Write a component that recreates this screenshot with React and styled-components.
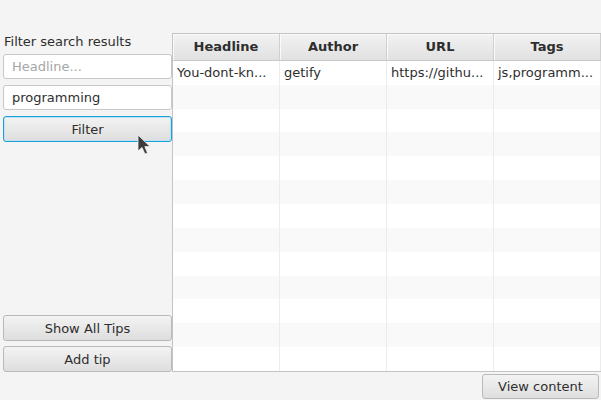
import React from 'react';
import styled, { createGlobalStyle } from 'styled-components';

const GlobalStyle = createGlobalStyle`
  html, body { margin: 0; padding: 0; }
  body {
    background: #f4f4f4;
    font-family: "DejaVu Sans", "Liberation Sans", sans-serif;
    font-size: 13px;
    color: #2e2e2e;
  }
`;

const Window = styled.div`
  width: 601px;
  height: 400px;
  display: flex;
  flex-direction: column;
  background: #f4f4f4;
  position: relative;
  overflow: hidden;
`;

const Main = styled.div`
  display: flex;
  height: 372px;
  padding-top: 33px;
  box-sizing: border-box;
`;

const Side = styled.div`
  width: 169px;
  padding-left: 3px;
  display: flex;
  flex-direction: column;
  gap: 6px;
  margin-top: 1px;
`;

const Label = styled.div`
  line-height: 16px;
  padding-left: 1px;
  margin-bottom: -2px;
`;

const Field = styled.div`
  height: 25px;
  box-sizing: border-box;
  border: 1px solid #c8c8c8;
  border-radius: 3px;
  background: #fff;
  padding: 0 8px;
  display: flex;
  align-items: center;
  color: ${p => (p.$placeholder ? '#a6a6a6' : '#2e2e2e')};
`;

const Button = styled.div`
  height: ${p => p.$h || 26}px;
  box-sizing: border-box;
  border: 1px solid ${p => (p.$focused ? '#1a9fd6' : '#b9b9b9')};
  box-shadow: ${p => (p.$focused ? 'inset 0 0 0 1px #bfe3f3' : 'none')};
  border-radius: 3px;
  background: linear-gradient(#f3f3f3, #dedede);
  display: flex;
  align-items: center;
  justify-content: center;
  color: #2e2e2e;
  width: ${p => (p.$w ? `${p.$w}px` : 'auto')};
`;

const Spacer = styled.div`
  flex: 1;
`;

const BottomButtons = styled.div`
  display: flex;
  flex-direction: column;
  gap: 5px;
`;

const Table = styled.div`
  flex: 1;
  border-top: 1px solid #c4c4c4;
  border-left: 1px solid #c4c4c4;
  border-bottom: 1px solid #c4c4c4;
  background: #fff;
  display: flex;
  flex-direction: column;
  overflow: hidden;
`;

const Cols = `display: grid; grid-template-columns: 107px 107px 107px 107px;`;

const Header = styled.div`
  ${Cols}
  height: 26px;
  background: linear-gradient(#f2f2f2, #e1e1e1);
  border-bottom: 1px solid #c8c8c8;
`;

const HeadCell = styled.div`
  display: flex;
  align-items: center;
  justify-content: center;
  font-weight: bold;
  border-right: 1px solid #cfcfcf;
  box-shadow: inset 1px 1px 0 #fafafa;
`;

const Row = styled.div`
  ${Cols}
  height: 24px;
  background: ${p => (p.$odd ? '#f9f9f9' : '#fff')};
`;

const Cell = styled.div`
  display: flex;
  align-items: center;
  padding-left: 4px;
  border-right: 1px solid #ececec;
  white-space: nowrap;
  overflow: hidden;
`;

const Bottom = styled.div`
  flex: 1;
  display: flex;
  justify-content: flex-end;
  padding: 2px 2px 0 0;
`;

const Cursor = styled.svg`
  position: absolute;
  left: 137px;
  top: 134px;
`;

const data = [['You-dont-kn...', 'getify', 'https://githu...', 'js,programm...']];

export default function App() {
  const rows = Array.from({ length: 13 }, (_, i) => data[i] || ['', '', '', '']);
  return (
    <>
      <GlobalStyle />
      <Window>
        <Main>
          <Side>
            <Label>Filter search results</Label>
            <Field $placeholder>Headline...</Field>
            <Field>programming</Field>
            <Button $focused>Filter</Button>
            <Spacer />
            <BottomButtons>
              <Button>Show All Tips</Button>
              <Button>Add tip</Button>
            </BottomButtons>
          </Side>
          <Table>
            <Header>
              <HeadCell>Headline</HeadCell>
              <HeadCell>Author</HeadCell>
              <HeadCell>URL</HeadCell>
              <HeadCell>Tags</HeadCell>
            </Header>
            {rows.map((r, i) => (
              <Row key={i} $odd={i % 2 === 1}>
                {r.map((c, j) => (
                  <Cell key={j}>{c}</Cell>
                ))}
              </Row>
            ))}
          </Table>
        </Main>
        <Bottom>
          <Button $w={117} $h={25}>View content</Button>
        </Bottom>
        <Cursor width="16" height="22" viewBox="0 0 16 22">
          <path d="M1 1 L1 17 L5 13.5 L8 20 L10.5 19 L7.8 12.6 L13 12.6 Z" fill="#3c3c3c" stroke="#f0f0f0" strokeWidth="0.8" />
        </Cursor>
      </Window>
    </>
  );
}
